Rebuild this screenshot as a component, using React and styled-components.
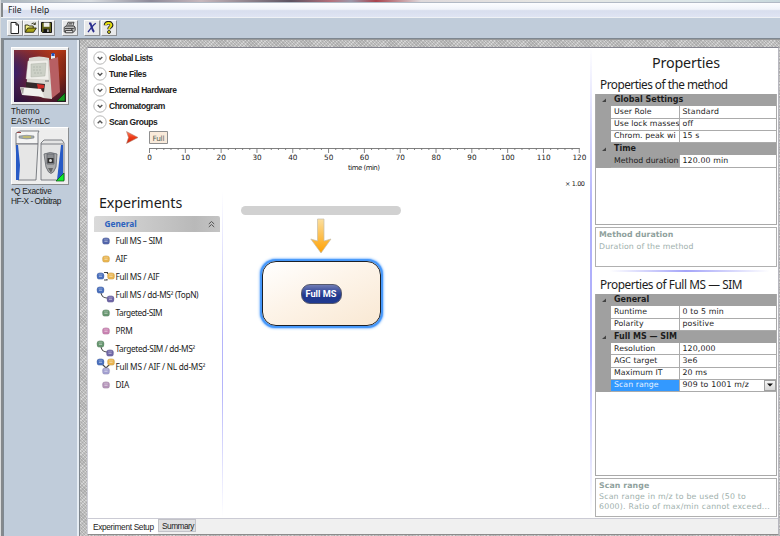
import React from "react";
import styled, { createGlobalStyle } from "styled-components";

const Global = createGlobalStyle`
  *, *::before, *::after { box-sizing: border-box; }
  html, body { margin: 0; padding: 0; overflow: hidden; }
  svg { display: block; flex: none; }
`;

const sans = `"Liberation Sans", Arial, sans-serif`;
const ui = `"Noto Sans", "Open Sans", sans-serif`;
const wide = `"DejaVu Sans", Verdana, sans-serif`;

const Label = styled.span`
  display: block;
  white-space: pre;
  font-family: ${(p) => p.$font || sans};
  font-size: ${(p) => p.$size || 8.5}px;
  line-height: ${(p) => p.$lh || 10}px;
  letter-spacing: ${(p) => p.$ls || 0}px;
  font-weight: ${(p) => (p.$bold ? 700 : 400)};
  color: ${(p) => p.$color || "#1c1c1c"};
`;

const Window = styled.div`
  width: 780px;
  height: 536px;
  display: grid;
  grid-template-rows: 3px 14px 22px 497px;
  background: #c0ccda;
  border-left: 1px solid #d9dbdc;
  box-shadow: inset 2px 0 0 #85898c;
`;

const Backdrop = styled.div`
  background: linear-gradient(90deg, #a9b4bb 0, #d9dde0 90px, #8e8a99 150px, #c8b8bd 200px, #5d5362 290px, #b5707b 330px, #9b98aa 350px, #a9444e 375px, #ded9db 420px, #e6e6e3 550px, #dbe6e8 700px, #c7d7dc 780px);
  border-bottom: 1px solid #b1b9c5;
`;

const MenuBar = styled.div`
  display: flex;
  gap: 9px;
  padding: 2px 0 0 5px;
  margin-left: 2px;
  background: linear-gradient(#fcfdff 0, #f0f3fa 45%, #d8deee 55%, #dfe4f3 100%);
`;

const ToolBar = styled.div`
  display: flex;
  padding: 2px 0 0 6px;
  border-top: 1px solid #eef1f5;
  border-bottom: 1px solid #7e8791;
  background: #c0ccda;
`;

const ToolButton = styled.div`
  width: 16px;
  height: 16px;
  margin-right: ${(p) => p.$gap || 0}px;
  display: grid;
  place-items: center;
  background: #e8e9ea;
  border: 1px solid;
  border-color: #fbfbfb #8d9094 #8d9094 #fbfbfb;
`;

const Main = styled.div`
  display: grid;
  grid-template-columns: 76px 1fr;
  margin-left: 2px;
`;

const Sidebar = styled.div`
  display: flex;
  flex-direction: column;
  padding: 7px 0 0 7px;
  border-top: 1px solid #7e8791;
  border-left: 1px solid #7f8992;
  background: #c0ccda;
  box-shadow: inset -2px 0 0 #e6edf4;
`;

const Device = styled.div`
  width: 58px;
  height: 58px;
  padding: 2px;
  margin: ${(p) => p.$top || 0}px 0 2px;
  background: #efefef;
  border: 1px solid;
  border-color: #ffffff #8a8d90 #8a8d90 #ffffff;
`;

const Stipple = styled.div`
  padding: 7px 1px 2px 7px;
  min-width: 0;
  display: flex;
  border-top: 1px solid #999;
  border-left: 1px solid #7d858c;
  background-color: #c0c0c0;
  background-image: repeating-linear-gradient(45deg, rgba(120,120,120,.28) 0 1px, transparent 1px 2.2px), repeating-linear-gradient(-45deg, rgba(255,255,255,.35) 0 1px, transparent 1px 3px);
`;

const Sheet = styled.div`
  flex: 1;
  min-width: 0;
  display: grid;
  grid-template-rows: 470px 16px;
  background: #fff;
  border-top: 1px solid #85858f;
  border-left: 1px solid #cfcfd8;
  border-right: 1px solid #b8b8c0;
  border-bottom: 1px solid #8c8c8c;
`;

const Columns = styled.div`
  display: grid;
  grid-template-columns: 506px 1fr;
  min-height: 0;
`;

const Work = styled.div`
  display: flex;
  flex-direction: column;
  background: linear-gradient(rgba(170,170,255,0), #b0b0fb 35%, #b0b0fb 65%, rgba(170,170,255,0)) 502px 0 / 2px 100% no-repeat;
`;

const Accordion = styled.div`
  display: flex;
  flex-direction: column;
  padding: 2px 0 0 4.5px;
`;

const Section = styled.div`
  height: 16px;
  display: flex;
  align-items: center;
  gap: 2.5px;
`;

const Lower = styled.div`
  display: grid;
  grid-template-columns: 136px 1fr;
  height: 325px;
`;

const Experiments = styled.div`
  padding: 4px 0 0 5.5px;
  background: linear-gradient(rgba(170,170,255,0), #b4b4fa 45%, #b4b4fa 60%, rgba(170,170,255,0)) 134px 0 / 1.3px 100% no-repeat;
`;

const GroupHeader = styled.div`
  width: 126px;
  height: 16px;
  margin-bottom: 0.5px;
  padding: 0 5px 0 11px;
  display: flex;
  align-items: center;
  justify-content: space-between;
  border-radius: 2px 2px 0 0;
  background: linear-gradient(90deg, #dadada, #b9b9b9 80%, #c4c4c4);
`;

const Item = styled.div`
  height: 17.95px;
  display: flex;
  align-items: center;
  gap: 1px;
  padding-left: 2px;
`;

const Canvas = styled.div`
  padding: 14px 0 0 17px;
`;

const Flow = styled.div`
  width: 160px;
  display: flex;
  flex-direction: column;
  align-items: center;
`;

const Track = styled.div`
  width: 160px;
  height: 9px;
  border-radius: 5px;
  background: #d1d1d1;
  margin-bottom: 3px;
`;

const Node = styled.div`
  width: 119px;
  height: 65px;
  margin-top: 7px;
  display: grid;
  place-items: center;
  border: 1.5px solid #1b2028;
  border-radius: 14px;
  background: linear-gradient(155deg, #fff 0, #fdf4e9 45%, #f9e8d3 100%);
  box-shadow: 0 0 1px 1.5px #4597fa, 0 0 3px 1.5px #4a9bff;
`;

const Pill = styled.div`
  width: 41px;
  height: 20px;
  display: grid;
  place-items: center;
  border: 1px solid #56596c;
  border-radius: 9px;
  background: linear-gradient(#707cb5 0, #4255a0 30%, #20388d 60%, #203a91 100%);
`;

const Side = styled.div`
  display: flex;
  flex-direction: column;
  padding: 0 1px 0 1px;
`;

const SideTitle = styled.div`
  height: ${(p) => p.$h}px;
  padding-top: ${(p) => p.$top}px;
  padding-left: ${(p) => p.$left}px;
`;

const Grid = styled.div`
  height: ${(p) => p.$h}px;
  border: 1px solid #a9a9a9;
  border-top: 0;
  margin-bottom: 2px;
`;

const GridHead = styled.div`
  height: 12.25px;
  display: grid;
  grid-template-columns: 18px 1fr;
  align-items: center;
  background: #a0a0a0;
`;

const GridRow = styled.div`
  height: 12.25px;
  display: grid;
  grid-template-columns: 15px 69px 1fr;
  background: #a0a0a0;
`;

const Cell = styled.div`
  display: flex;
  align-items: center;
  justify-content: space-between;
  overflow: hidden;
  min-width: 0;
  padding-left: ${(p) => (p.$name ? 3 : 2.5)}px;
  border-bottom: 1px solid #ababab;
  border-right: ${(p) => (p.$name ? "1px solid #ababab" : 0)};
  background: ${(p) => (p.$tone === "blue" ? "#3399ff" : p.$tone === "gray" ? "#a0a0a0" : "#fff")};
`;

const DropButton = styled.div`
  width: 12px;
  height: 11px;
  flex: none;
  display: grid;
  place-items: center;
  border: 1px solid #a0a0a0;
  background: linear-gradient(#f6f6f6, #d6d6d6);
`;

const Help = styled.div`
  height: ${(p) => p.$h}px;
  padding: 1px 0 0 3px;
  border: 1px solid #b0b0b0;
`;

const Divider = styled.div`
  height: 2px;
  margin: 3px 0 0;
  background: linear-gradient(90deg, rgba(150,150,255,0) 8%, #a4a4f8 50%, rgba(150,150,255,0) 96%);
`;

const Tabs = styled.div`
  display: flex;
  align-items: flex-start;
  background: #f0f0f0;
  border-top: 1.4px solid #cbcbd4;
`;

const Tab = styled.div`
  height: ${(p) => (p.$on ? 15 : 13)}px;
  width: ${(p) => p.$w}px;
  padding: ${(p) => (p.$on ? 3 : 1)}px 0 0 ${(p) => (p.$on ? 5 : 3)}px;
  background: ${(p) => (p.$on ? "#fff" : "#e0e0e2")};
  border: ${(p) => (p.$on ? "0" : "1px solid #c2c2c8")};
`;

const Chevron = ({ up }) => (
  <svg width="14" height="14" viewBox="0 0 14 14">
    <circle cx="7" cy="7" r="6.2" fill="#fff" stroke="#a5a5a5" strokeWidth=".8" />
    <path d={up ? "M4.7 8.3 7 6l2.3 2.3" : "M4.7 6 7 8.3 9.3 6"} fill="none" stroke="#555" strokeWidth="1.4" />
  </svg>
);

const icons = {
  new: <path d="M3 1.5h5l2.5 2.5v8.5H3z M8 1.5V4h2.5" fill="#fff" stroke="#222" />,
  open: (
    <g stroke="#26260a" strokeWidth=".9">
      <path d="M1.2 11V4h3l1 1h4v2" fill="#f4f08a" />
      <path d="M1.2 11.3 3.7 7h8.6L9.6 11.3z" fill="#a8a318" />
      <path d="M7.5 2.8q2-1.8 3.8.6m0-2v2H9.5" fill="none" />
    </g>
  ),
  save: (
    <g>
      <path d="M1.5 1.5h10v10h-9l-1-1z" fill="#62631a" stroke="#151515" />
      <path d="M3.7 1.6h5.8v4.2H3.7z" fill="#eeeeea" />
      <path d="M3.5 7.8h6v3.7h-6z" fill="#161616" />
      <path d="M7.3 8.5h1.3v2.5H7.3z" fill="#e8e8e8" />
    </g>
  ),
  print: (
    <g stroke="#3b3b3b" strokeWidth=".9">
      <path d="M3.5 5.5 5 1.3h6L9.6 5.5z" fill="#fff" />
      <path d="M1.2 6.3 3 5h8.2l1 1.5v3L10.5 11H1.2z" fill="#b9b9b9" />
      <path d="M2.5 9.5h7.3v2.3H2.5z" fill="#ddd" />
      <path d="M5.5 2.7h4M5 4h4M2 7.5h8.5l1.5-1M8 8.7h1.5" fill="none" />
    </g>
  ),
  x: (
    <g fill="none" stroke="#2c2f8f">
      <path d="M4 2.5h1.5c1 2.5 1.6 6.5 3.5 8.5" strokeWidth="2" />
      <path d="M10.8 2.2C8 4 5.5 7.5 3 11.2" strokeWidth="1.3" />
    </g>
  ),
  help: (
    <g>
      <path d="M3.5 4.3c0-3.6 6.3-3.5 6.1 0C9.5 6 7 6 7 8.3" fill="none" stroke="#222" strokeWidth="3.6" />
      <path d="M3.7 4.1c.3-3 5.8-2.8 5.6.2C9.2 5.8 7 6.1 7 8.3" fill="none" stroke="#e6df10" strokeWidth="2" />
      <circle cx="7" cy="11" r="1.5" fill="#e6df10" stroke="#222" strokeWidth=".9" />
    </g>
  ),
};

const Tool = ({ name, gap }) => (
  <ToolButton $gap={gap}>
    <svg width="14" height="14" viewBox="0 0 14 14">{icons[name]}</svg>
  </ToolButton>
);

const Thermo = () => (
  <svg width="52" height="52" viewBox="0 0 52 52">
    <defs>
      <linearGradient id="sky" x1="0" y1="0.4" x2="1" y2="0.6">
        <stop offset="0" stopColor="#352074" />
        <stop offset=".35" stopColor="#74203c" />
        <stop offset=".7" stopColor="#c53a12" />
        <stop offset="1" stopColor="#752116" />
      </linearGradient>
      <linearGradient id="low" x1="0" y1="0" x2="0" y2="1">
        <stop offset="0" stopColor="#b33a16" stopOpacity=".6" />
        <stop offset=".45" stopColor="#441c1c" stopOpacity=".1" />
        <stop offset="1" stopColor="#1a0d38" stopOpacity=".7" />
      </linearGradient>
    </defs>
    <path d="M0 0h52v52H0z" fill="url(#sky)" />
    <path d="M0 0h52v52H0z" fill="url(#low)" />
    <path d="m35 10 9-3 2 35-9 7z" fill="#b75f63" />
    <path d="M37 9V4h4v4z" fill="#e6edf2" />
    <path d="M37.5 3h3v3h-3z" fill="#2452b8" />
    <path d="M15 8q10-3 20 0l3 41-9-1-17-8z" fill="#d9d7d1" />
    <path d="M14 11 34 10l1 20-23-1z" fill="#efeee9" stroke="#c5c3bc" strokeWidth=".4" />
    <path d="m17 14 15-1-1 13-14 1z" fill="#ccd0c6" stroke="#a4a89f" strokeWidth=".4" />
    <path d="M19 17h9m-9 3h8m-7 3h9" stroke="#a4ada3" strokeWidth=".6" strokeDasharray="2 1" />
    <path d="m12 32 19 2-1 8-18-4z" fill="#34292a" />
    <path d="m23 34 7 1v3l-6 1z" fill="#d22c28" />
    <path d="m6 37 21 2 3 8-22-2z" fill="#f2f1ed" />
    <path d="m6 37 3 8 1-7z" fill="#a9a6a1" />
    <path d="M31 31h4" stroke="#666" strokeWidth="1" />
    <path d="M51 43v8h-8z" fill="#159820" stroke="#073a0b" strokeWidth=".7" />
  </svg>
);

const Exactive = () => (
  <svg width="52" height="52" viewBox="0 0 52 52">
    <path d="M0 0h52v52H0z" fill="#ededed" />
    <g stroke="#60636a" strokeWidth=".8">
      <path d="M2 3 6 1h19l-1 2v11H2z" fill="#f4f4f4" />
      <path d="M2 14 4 50h18l2-36z" fill="#e6e6e6" />
      <path d="M2 15h2l2 20-1 15H2z" fill="#285bc6" stroke="none" />
      <path d="m27 13 3-3h18l2 3v37H27z" fill="#e4e4e4" />
      <path d="M27 14h22" fill="none" />
      <path d="M47 15h2v35h-6z" fill="#285bc6" stroke="none" />
      <path d="M30 24q6-3 13 0l-1 13q-5 13-10 0z" fill="#a9aaab" />
      <path d="M33 24h7v10h-7z" fill="#8c8e91" />
    </g>
    <path d="M33.5 28h6v5h-6z" fill="#333" />
    <circle cx="36.5" cy="30.5" r="1.5" fill="#ddd" />
    <path d="m34 38 5 0-2 5z" fill="#666" />
    <path d="M5 6q8-1.5 15 0v2q-7 2-15 0z" fill="#9faaae" stroke="#777" strokeWidth=".5" />
    <path d="M9 7h8" stroke="#d5c34c" strokeWidth="1.2" />
    <path d="M3 2.5h4" stroke="#944" />
    <path d="M50 43v8h-8z" fill="#12ed2c" stroke="#0b4f13" strokeWidth=".7" />
  </svg>
);

const tones = { blue: "#5164aa", sky: "#496fbd", gold: "#e9b44d", violet: "#6e65a6", lilac: "#a29fd0", green: "#66956f", pink: "#c981b1", mauve: "#b494b9" };
const glyphs = [
  ["Full MS – SIM", -0.35, [["blue", 10, 9]]],
  ["AIF", -0.35, [["gold", 10, 9]]],
  ["Full MS / AIF", -0.3, [["sky", 4.5, 8], ["gold", 15, 8]], "M8 4.5h3.5v1.5M8 12h3v-1"],
  ["Full MS / dd-MS² (TopN)", -0.35, [["sky", 4.5, 4], ["violet", 14.5, 13]], "M5 7q1 5 6 5"],
  ["Targeted-SIM", -0.45, [["green", 10, 9]]],
  ["PRM", -0.25, [["pink", 10, 9]]],
  ["Targeted-SIM / dd-MS²", -0.38, [["green", 4.5, 4], ["violet", 14, 13]], "M5 7q1 5 6 5"],
  ["Full MS / AIF / NL dd-MS²", -0.25, [["sky", 4.5, 4], ["gold", 15, 4], ["lilac", 10, 13]], "M6 6l4 4 4-4M10 10v2"],
  ["DIA", -0.2, [["mauve", 10, 9]]],
];

const Glyph = ({ dots, link }) => (
  <svg width="19" height="18" viewBox="0 0 19 18">
    {link && <path d={link} fill="none" stroke="#444" strokeWidth="1.1" />}
    {dots.map(([tone, x, y], i) => (
      <g key={i}>
        <rect x={x - 3.6} y={y - 3.3} width="7.2" height="6.6" rx="2.6" fill={tones[tone]} stroke="#777" strokeOpacity=".25" strokeWidth=".5" />
        <path d={`M${x - 2} ${y - 1.8}h4`} stroke="#fff" strokeOpacity=".3" />
        <path d={`M${x - 1.6} ${y + 0.2}h3.2`} stroke="#fff" strokeOpacity=".6" strokeWidth="1" />
      </g>
    ))}
  </svg>
);

const Timeline = () => (
  <svg width="503" height="62" viewBox="87 130 503 62" fontFamily={wide} fontSize="7.3" fill="#222">
    <defs>
      <linearGradient id="flag" x1="0" y1="0" x2="0" y2="1">
        <stop offset="0" stopColor="#ff8065" />
        <stop offset=".5" stopColor="#ee3a16" />
        <stop offset="1" stopColor="#c92610" />
      </linearGradient>
    </defs>
    <path d="m125.500 131.500 11.500 6-11.500 6 2-6z" fill="url(#flag)" stroke="#a9806f" strokeWidth=".5" />
    <path d="M148.500 131.500h18v12h-18z" fill="#f9eada" stroke="#8f8f8f" />
    <text x="151.500" y="140.500" textLength="12" fill="#555f55">Full</text>
    <path d="M148.500 148.500h430" stroke="#808080" />
    {Array.from({ length: 61 }, (_, i) => (
      <path key={i} d={`M${148.5 + i * 7.163} 148v${i % 5 ? 2 : 5}`} stroke="#777" strokeWidth=".9" />
    ))}
    {Array.from({ length: 13 }, (_, i) => (
      <text key={i} x={148.6 + i * 35.82} y="160.400" textAnchor="middle">{i * 10}</text>
    ))}
    <text x="347" y="169.500" fontSize="7" textLength="32">time (min)</text>
    <text x="564" y="185.500" fontSize="6.5" textLength="20">× 1.00</text>
  </svg>
);

const Triangle = () => (
  <svg width="18" height="8" viewBox="0 0 18 8"><path d="m6 6 4-3.5v3.5z" fill="#444" /></svg>
);

const Row = ({ name, value, tone, drop }) => (
  <GridRow>
    <span />
    <Cell $name $tone={tone}>
      <Label $font={wide} $size={7.8} $ls={tone === "gray" ? 0 : 0.06} $color={tone === "blue" ? "#e8f3ff" : undefined}>{name}</Label>
    </Cell>
    <Cell>
      <Label $font={wide} $size={7.8} $ls={0.14}>{value}</Label>
      {drop && <DropButton><svg width="6" height="4" viewBox="0 0 6 4"><path d="M0 .5h6l-3 3z" fill="#111" /></svg></DropButton>}
    </Cell>
  </GridRow>
);

const Head = ({ children }) => (
  <GridHead><Triangle /><Label $font={wide} $bold $size={8}>{children}</Label></GridHead>
);

const sections = ["Global Lists", "Tune Files", "External Hardware", "Chromatogram", "Scan Groups"];

export default function App() {
  return (
    <Window>
      <Global />
      <Backdrop />
      <MenuBar>
        <Label $font={ui} $size={8.5}>File</Label>
        <Label $font={ui} $size={8.5}>Help</Label>
      </MenuBar>
      <ToolBar>
        <Tool name="new" /><Tool name="open" /><Tool name="save" gap={7} />
        <Tool name="print" gap={6} /><Tool name="x" gap={1} /><Tool name="help" />
      </ToolBar>
      <Main>
        <Sidebar>
          <Device><Thermo /></Device>
          <Label $lh={9.5} $size={8.3}>Thermo</Label>
          <Label $lh={9.5} $size={8.3} $ls={-0.05}>EASY-nLC</Label>
          <Device $top={1}><Exactive /></Device>
          <Label $lh={9.5} $size={8.3} $ls={-0.25}>*Q Exactive</Label>
          <Label $lh={9.5} $size={8.3} $ls={-0.45}>HF-X - Orbitrap</Label>
        </Sidebar>
        <Stipple>
          <Sheet>
            <Columns>
              <Work>
                <Accordion>
                  {sections.map((s) => (
                    <Section key={s}><Chevron up={s === "Scan Groups"} /><Label $bold $size={8.5} $ls={-0.42}>{s}</Label></Section>
                  ))}
                </Accordion>
                <Timeline />
                <Lower>
                  <Experiments>
                    <SideTitle $h={20} $top={0} $left={5.5}><Label $font={ui} $size={14.3} $lh={14} $ls={-0.1}>Experiments</Label></SideTitle>
                    <GroupHeader>
                      <Label $font={ui} $bold $size={8.3} $color="#2b62be">General</Label>
                      <svg width="7" height="8" viewBox="0 0 7 8"><path d="m.8 4 2.7-2.5L6.2 4M.8 7l2.7-2.5L6.2 7" fill="none" stroke="#555" /></svg>
                    </GroupHeader>
                    {glyphs.map(([text, ls, dots, link]) => (
                      <Item key={text}><Glyph dots={dots} link={link} /><Label $font={ui} $size={8.3} $ls={ls}>{text}</Label></Item>
                    ))}
                  </Experiments>
                  <Canvas>
                    <Flow>
                      <Track />
                      <svg width="22" height="36" viewBox="0 0 22 36">
                        <defs><linearGradient id="arrow" x1="0" y1="0" x2="0" y2="1"><stop offset="0" stopColor="#fbdf9f" /><stop offset="1" stopColor="#ffa000" /></linearGradient></defs>
                        <path d="M7.5 1h6.500v22l7-2L11 35 .8 21l6.700 2z" fill="url(#arrow)" stroke="#c5bda9" strokeWidth=".7" />
                      </svg>
                      <Node><Pill><Label $font={`Roboto, ${ui}`} $bold $size={9.2} $color="#fff">Full MS</Label></Pill></Node>
                    </Flow>
                  </Canvas>
                </Lower>
              </Work>
              <Side>
                <SideTitle $h={29} $top={6} $left={57}><Label $font={ui} $size={14.3} $lh={18} $ls={-0.15}>Properties</Label></SideTitle>
                <SideTitle $h={17} $top={0} $left={5}><Label $font={ui} $size={11.8} $lh={14} $ls={-0.5}>Properties of the method</Label></SideTitle>
                <Grid $h={131}>
                  <Head>Global Settings</Head>
                  <Row name="User Role" value="Standard" />
                  <Row name="Use lock masses" value="off" />
                  <Row name="Chrom. peak wi" value="15 s" />
                  <Head>Time</Head>
                  <Row name="Method duration" value="120.00 min" tone="gray" />
                </Grid>
                <Help $h={40}>
                  <Label $font={wide} $bold $size={7.8} $lh={12} $ls={0.05} $color="#8fa19d">Method duration</Label>
                  <Label $font={wide} $size={7.8} $lh={11} $ls={0.13} $color="#9eafac">Duration of the method</Label>
                </Help>
                <Divider />
                <SideTitle $h={22} $top={5} $left={5}><Label $font={ui} $size={11.8} $lh={14} $ls={-0.42}>Properties of Full MS — SIM</Label></SideTitle>
                <Grid $h={182}>
                  <Head>General</Head>
                  <Row name="Runtime" value="0 to 5 min" />
                  <Row name="Polarity" value="positive" />
                  <Head>Full MS — SIM</Head>
                  <Row name="Resolution" value="120,000" />
                  <Row name="AGC target" value="3e6" />
                  <Row name="Maximum IT" value="20 ms" />
                  <Row name="Scan range" value="909 to 1001 m/z" tone="blue" drop />
                </Grid>
                <Help $h={39}>
                  <Label $font={wide} $bold $size={7.8} $lh={12} $ls={0.1} $color="#8fa19d">Scan range</Label>
                  <Label $font={wide} $size={7.8} $lh={10} $ls={0.2} $color="#9eafac">Scan range in m/z to be used (50 to</Label>
                  <Label $font={wide} $size={7.8} $lh={10} $ls={0.23} $color="#9eafac">6000). Ratio of max/min cannot exceed...</Label>
                </Help>
              </Side>
            </Columns>
            <Tabs>
              <Tab $on $w={70}><Label $size={8.3} $ls={-0.33}>Experiment Setup</Label></Tab>
              <Tab $w={38}><Label $size={8.3} $ls={-0.5}>Summary</Label></Tab>
            </Tabs>
          </Sheet>
        </Stipple>
      </Main>
    </Window>
  );
}
